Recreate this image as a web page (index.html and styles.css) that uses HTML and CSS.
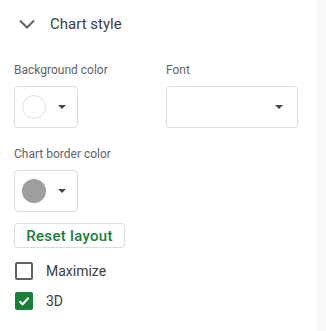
FILE: index.html
```html
<!DOCTYPE html>
<html lang="en">
<head>
    <meta charset="UTF-8">
    <title>Chart style</title>
    <link rel="stylesheet" href="styles.css">
</head>
<body>
    <div class="page">
        <div class="panel">
            <div class="header">
                <svg class="chevron" width="16" height="10" viewBox="0 0 16 10">
                    <path d="M1 1.5 L8 8.5 L15 1.5" fill="none" stroke="#5f6368" stroke-width="2"/>
                </svg>
                <span class="title">Chart style</span>
            </div>

            <div class="row">
                <div class="field">
                    <div class="label">Background color</div>
                    <div class="picker">
                        <span class="swatch swatch-white"></span>
                        <span class="arrow"></span>
                    </div>
                </div>
                <div class="field">
                    <div class="label">Font</div>
                    <div class="select">
                        <span class="arrow"></span>
                    </div>
                </div>
            </div>

            <div class="field field-border">
                <div class="label">Chart border color</div>
                <div class="picker">
                    <span class="swatch swatch-gray"></span>
                    <span class="arrow"></span>
                </div>
            </div>

            <button class="reset">Reset layout</button>

            <div class="checks">
                <label class="check">
                    <span class="box"></span>
                    <span>Maximize</span>
                </label>
                <label class="check">
                    <span class="box box-on">
                        <svg width="14" height="14" viewBox="0 0 14 14">
                            <path d="M2.5 7.2 L5.6 10.2 L11.6 3.8" fill="none" stroke="#fff" stroke-width="2"/>
                        </svg>
                    </span>
                    <span>3D</span>
                </label>
            </div>
        </div>
        <div class="strip"></div>
    </div>
</body>
</html>
```

FILE: styles.css
```css
body {
    margin: 0;
    font-family: Roboto, "Liberation Sans", sans-serif;
    background-color: #ffffff;
    color: #3c4043;
}
.page {
    display: flex;
    height: 331px;
}
.panel {
    width: 316px;
    padding: 0 14px;
    box-sizing: border-box;
}
.strip {
    flex: 1;
    background-color: #f8f9fa;
}
.header {
    display: flex;
    align-items: center;
    height: 48px;
    padding-left: 5px;
}
.chevron {
    margin-top: -1px;
}
.title {
    margin-left: 15px;
    font-size: 15px;
    color: #3c4043;
}
.row {
    display: grid;
    grid-template-columns: 152px 132px;
    margin-top: 14px;
}
.label {
    font-size: 12px;
    line-height: 16px;
    color: #5f6368;
    margin-bottom: 8px;
}
.field-border {
    margin-top: 18px;
}
.picker, .select {
    display: flex;
    align-items: center;
    height: 42px;
    border: 1px solid #dadce0;
    border-radius: 4px;
    box-sizing: border-box;
}
.picker {
    width: 64px;
    padding-left: 7px;
}
.select {
    width: 132px;
    justify-content: flex-end;
    padding-right: 14px;
}
.swatch {
    width: 24px;
    height: 24px;
    border-radius: 50%;
    box-sizing: border-box;
}
.swatch-white {
    border: 1px solid #dadce0;
}
.swatch-gray {
    background-color: #9e9e9e;
}
.arrow {
    width: 0;
    height: 0;
    border-left: 4px solid transparent;
    border-right: 4px solid transparent;
    border-top: 4px solid #444746;
}
.picker .arrow {
    margin-left: 12px;
}
.reset {
    display: block;
    margin-top: 11px;
    width: 111px;
    height: 25px;
    padding: 0;
    background: #fff;
    border: 1px solid #dadce0;
    border-radius: 4px;
    font-family: Roboto, "Liberation Sans", sans-serif;
    font-size: 15px;
    font-weight: 500;
    letter-spacing: 0.3px;
    color: #188038;
}
.checks {
    margin-top: 14px;
    display: flex;
    flex-direction: column;
    gap: 12px;
}
.check {
    display: flex;
    align-items: center;
    height: 18px;
    font-size: 14px;
    color: #3c4043;
}
.box {
    display: flex;
    align-items: center;
    justify-content: center;
    width: 18px;
    height: 18px;
    margin-left: 1px;
    margin-right: 13px;
    border: 2px solid #5f6368;
    border-radius: 2px;
    box-sizing: border-box;
}
.box-on {
    background-color: #188038;
    border-color: #188038;
}
```
